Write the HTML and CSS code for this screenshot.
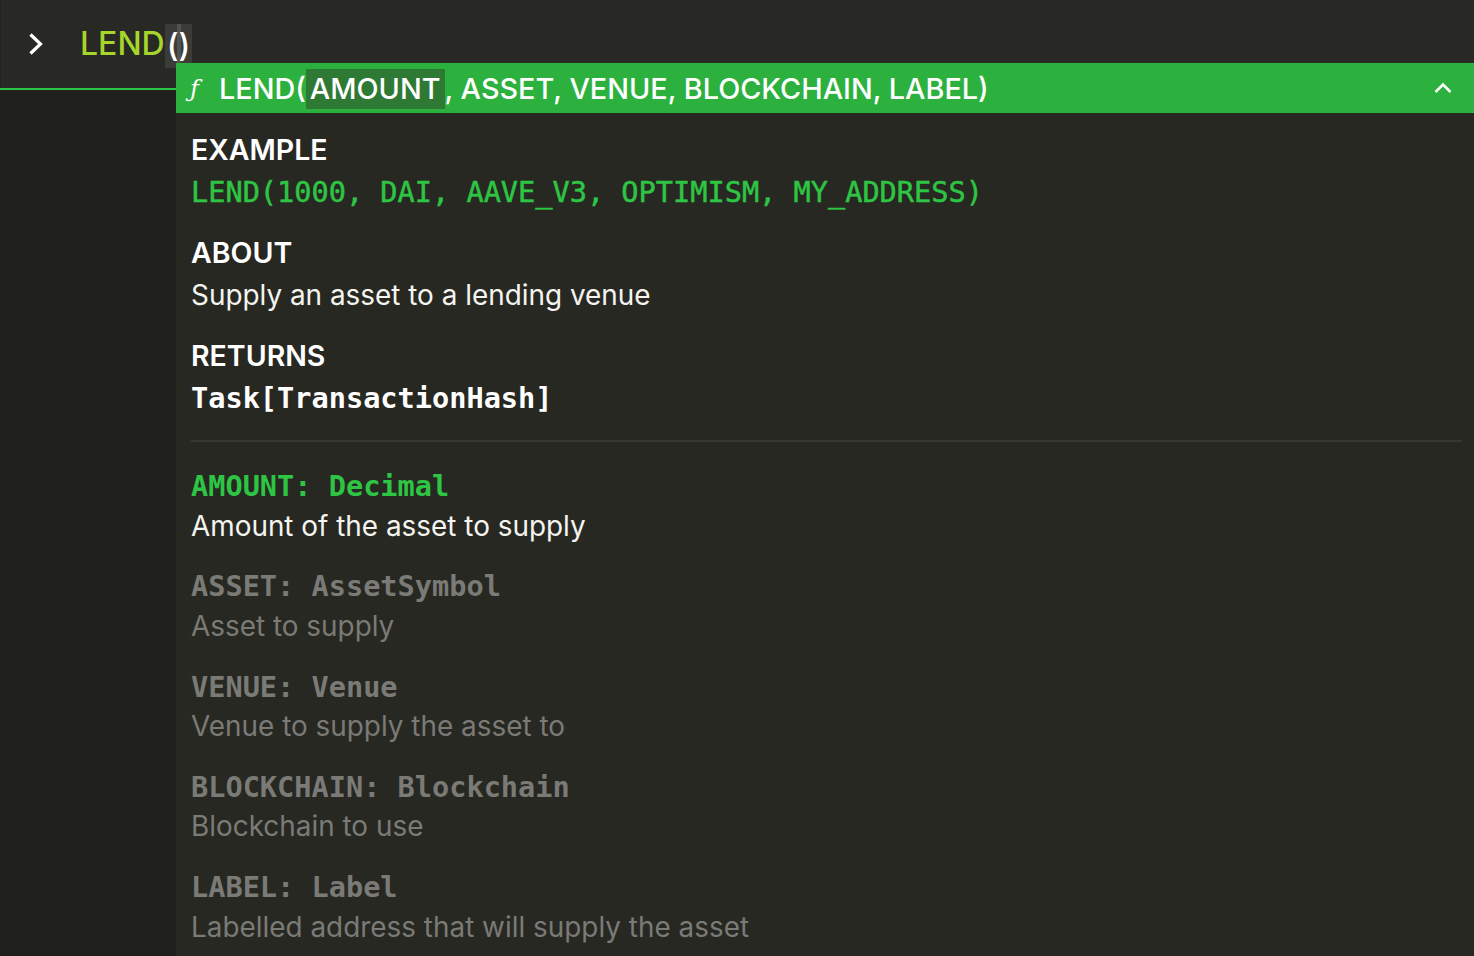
FILE: index.html
```html
<!DOCTYPE html>
<html lang="en">
<head>
<meta charset="utf-8">
<title>LEND</title>
<link rel="stylesheet" href="styles.css">
</head>
<body>
<div class="app">
  <div class="prompt">
    <svg class="prompt-icon" width="16" height="24" viewBox="0 0 16 24"><path d="M2.5 2.5 L12.5 12 L2.5 21.5" fill="none" stroke="#ffffff" stroke-width="3.2" stroke-linecap="butt" stroke-linejoin="miter"/></svg>
    <div class="input"><span class="fn">LEND</span><span class="cursor-box">()</span></div>
  </div>
  <div class="prompt-line"></div>
  <div class="output"></div>

  <div class="popup">
    <div class="sig">
      <span class="sig-icon">ƒ</span>
      <span class="sig-text">LEND(<span class="active">AMOUNT</span>, ASSET, VENUE, BLOCKCHAIN, LABEL)</span>
      <svg class="collapse" width="18" height="12" viewBox="0 0 18 12"><path d="M1.5 10 L9 2.5 L16.5 10" fill="none" stroke="#ffffff" stroke-width="2.6"/></svg>
    </div>
    <div class="body">
      <section class="block">
        <h3 class="label">EXAMPLE</h3>
        <div class="code example">LEND(1000, DAI, AAVE_V3, OPTIMISM, MY_ADDRESS)</div>
      </section>
      <section class="block">
        <h3 class="label">ABOUT</h3>
        <p class="text">Supply an asset to a lending venue</p>
      </section>
      <section class="block">
        <h3 class="label">RETURNS</h3>
        <div class="code returns">Task[TransactionHash]</div>
      </section>
      <hr class="divider">
      <div class="params">
        <div class="param current">
          <div class="code pname">AMOUNT: Decimal</div>
          <p class="text">Amount of the asset to supply</p>
        </div>
        <div class="param">
          <div class="code pname">ASSET: AssetSymbol</div>
          <p class="text">Asset to supply</p>
        </div>
        <div class="param">
          <div class="code pname">VENUE: Venue</div>
          <p class="text">Venue to supply the asset to</p>
        </div>
        <div class="param">
          <div class="code pname">BLOCKCHAIN: Blockchain</div>
          <p class="text">Blockchain to use</p>
        </div>
        <div class="param">
          <div class="code pname">LABEL: Label</div>
          <p class="text">Labelled address that will supply the asset</p>
        </div>
      </div>
    </div>
  </div>
</div>
</body>
</html>
```

FILE: styles.css
```css
html, body {
  margin: 0;
  padding: 0;
  background: #282824;
}
body {
  width: 1474px;
  height: 956px;
  overflow: hidden;
  font-family: Inter, "Noto Sans", sans-serif;
  color: #f4f4f0;
}
.app {
  position: relative;
  width: 1474px;
  height: 956px;
  display: flex;
  flex-direction: column;
}
.prompt {
  height: 88px;
  display: flex;
  align-items: center;
  background: #282824;
  border-left: 1px solid #222220;
}
.prompt-icon {
  margin-left: 27px;
  margin-right: 36px;
}
.input {
  font-size: 32px;
  font-weight: 500;
  line-height: 40px;
  display: flex;
  align-items: center;
}
.fn {
  color: #a6d62c;
}
.cursor-box {
  position: relative;
  color: #ffffff;
  background: #3b3b37;
  padding: 0 2px;
  height: 44px;
  line-height: 44px;
  margin-top: 4px;
}
.cursor-box::after {
  content: "";
  position: absolute;
  left: 12px;
  top: 0;
  width: 4px;
  height: 44px;
  background: rgba(255,255,255,0.12);
}
.prompt-line {
  height: 2px;
  background: #2dc446;
}
.output {
  flex: 1;
  background: #1f1f1d;
}
.popup {
  position: absolute;
  left: 176px;
  top: 63px;
  right: 0;
  bottom: 0;
  background: #282823;
}
.sig {
  height: 50px;
  background: #2db13e;
  display: flex;
  align-items: center;
  padding-left: 14px;
  padding-right: 22px;
  color: #ffffff;
}
.sig-icon {
  font-family: "DejaVu Serif", serif;
  font-style: italic;
  font-size: 24px;
  width: 29px;
  padding-top: 2px;
}
.sig-text {
  flex: 1;
  font-size: 28.8px;
  font-weight: 500;
  line-height: 40px;
  padding-top: 2px;
}
.active {
  background: #2e7a35;
  padding: 0 4px;
  display: inline-block;
  height: 40px;
}
.body {
  padding: 16px 12px 0 15px;
}
.block + .block {
  margin-top: 19px;
}
.label {
  margin: 0;
  font-size: 28.5px;
  font-weight: 600;
  line-height: 42px;
  color: #ffffff;
}
.text {
  margin: 0;
  font-size: 27.9px;
  font-weight: 400;
  line-height: 42px;
}
.code {
  font-family: "DejaVu Sans Mono", "Liberation Mono", monospace;
  font-size: 28.6px;
  line-height: 42px;
}
.example {
  color: #2ec544;
  -webkit-text-stroke: 0.5px #2ec544;
}
.returns {
  color: #ffffff;
  font-weight: bold;
}
.divider {
  margin: 21px 0 0 0;
  border: 0;
  height: 2px;
  background: #363632;
}
.params {
  padding-top: 24px;
}
.param + .param {
  margin-top: 20.8px;
}
.param .pname,
.param .text {
  line-height: 40px;
}
.param .text {
  margin-top: -0.5px;
}
.pname {
  font-weight: bold;
  color: #7a7a76;
}
.param .text {
  color: #7a7a76;
}
.param.current .pname {
  color: #2ec544;
}
.param.current .text {
  color: #f4f4f0;
}
```
